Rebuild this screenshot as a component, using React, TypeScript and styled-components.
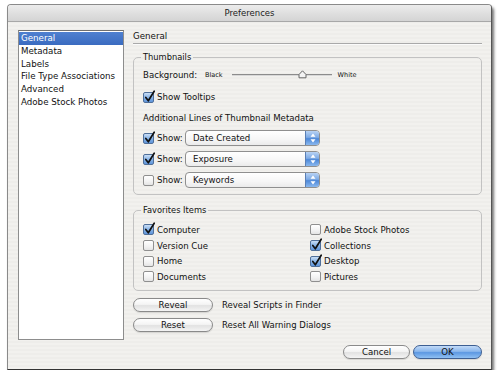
import React from "react";
import styled, { createGlobalStyle } from "styled-components";

const Global = createGlobalStyle`
  html, body { margin: 0; padding: 0; background: #ffffff; }
  body { font-family: "DejaVu Sans", "Liberation Sans", sans-serif; font-size: 8.5px; color: #111; }
  * { box-sizing: border-box; }
`;

const Window = styled.div`
  margin: 4px 0 0 7px;
  width: 485px;
  height: 366px;
  border: 1px solid #8a8a8a;
  border-right-color: #555;
  border-bottom-color: #333;
  border-radius: 4px 4px 0 0;
  box-shadow: 2px 3px 3px rgba(0, 0, 0, 0.55);
  background: repeating-linear-gradient(180deg, #eeedea 0px, #eeedea 2px, #f2f1ee 2px, #f2f1ee 4px);
  display: flex;
  flex-direction: column;
  overflow: hidden;
`;

const TitleBar = styled.div`
  height: 17px;
  border-bottom: 1px solid #a8a8a8;
  background: linear-gradient(180deg, #ececec 0%, #dedede 55%, #d4d4d4 100%);
  display: flex;
  align-items: center;
  justify-content: center;
  font-size: 8.5px;
  color: #222;
`;

const Content = styled.div`
  flex: 1;
  display: flex;
  flex-direction: column;
  padding: 8px 9px 10px 10px;
`;

const Columns = styled.div`
  display: flex;
  gap: 9px;
  height: 310px;
`;

const Sidebar = styled.ul`
  list-style: none;
  margin: 0;
  padding: 1px 0 0;
  width: 106px;
  height: 310px;
  background: #fff;
  border: 1px solid #8d8d8d;
  border-top-color: #6f6f6f;
`;

const SideItem = styled.li<{ $selected?: boolean }>`
  height: 12.8px;
  line-height: 12.8px;
  padding-left: 2px;
  font-size: 8.7px;
  white-space: nowrap;
  color: ${(p) => (p.$selected ? "#fff" : "#111")};
  background: ${(p) => (p.$selected ? "linear-gradient(180deg,#4f80d0,#3a6bc0)" : "transparent")};
`;

const Main = styled.div`
  flex: 1;
  display: flex;
  flex-direction: column;
`;

const Header = styled.div`
  height: 12px;
  line-height: 12px;
  font-size: 8.7px;
`;

const Separator = styled.div`
  margin-top: 1px;
  height: 2px;
  border-top: 1px solid #a9a9a9;
  border-bottom: 1px solid #fbfbfb;
`;

const Group = styled.fieldset<{ $mt: number; $pb: number }>`
  margin: ${(p) => p.$mt}px 0 0;
  padding: 0 10px ${(p) => p.$pb}px 9px;
  min-width: 0;
  border: 1px solid #c2c2c2;
  border-radius: 5px;
`;

const Legend = styled.legend`
  padding: 0 2px;
  margin-left: -2px;
  height: 12px;
  line-height: 12px;
  font-size: 8.3px;
`;

const Row = styled.div<{ $mt?: number; $h?: number }>`
  display: flex;
  align-items: center;
  height: ${(p) => p.$h ?? 14}px;
  margin-top: ${(p) => p.$mt ?? 0}px;
  white-space: nowrap;
  font-size: 8.6px;
`;

const BgLabel = styled.span`
  width: 62px;
  font-size: 8.6px;
`;

const Tiny = styled.span`
  font-size: 6.5px;
`;

const Slider = styled.div`
  position: relative;
  width: 100px;
  height: 2px;
  margin: 0 6px 0 9px;
  background: #8c8c8c;
  border-bottom: 1px solid #d8d8d8;
`;

const Knob = styled.svg`
  position: absolute;
  left: 66px;
  top: -4px;
`;

const Box = styled.span<{ $on?: boolean }>`
  position: relative;
  display: inline-block;
  width: 11px;
  height: 11px;
  border: 1px solid ${(p) => (p.$on ? "#4f6f9a" : "#8f8f8f")};
  border-radius: 2px;
  background: ${(p) =>
    p.$on
      ? "linear-gradient(180deg,#c9def6 0%,#86b2e6 50%,#5f95db 100%)"
      : "linear-gradient(180deg,#ffffff 0%,#f2f2f2 60%,#e4e4e4 100%)"};
  flex: none;
`;

const Tick = styled.svg`
  position: absolute;
  left: 0px;
  top: -3px;
`;

const CheckLabel = styled.span`
  margin-left: 3px;
  font-size: 8.6px;
`;

function Check({ on }: { on?: boolean }) {
  return (
    <Box $on={on}>
      {on && (
        <Tick width="12" height="13" viewBox="0 0 12 13">
          <path d="M1.8 7.5 L4.3 10.8 L10.2 1.2" fill="none" stroke="#111" strokeWidth="1.7" strokeLinecap="round" strokeLinejoin="round" />
        </Tick>
      )}
    </Box>
  );
}

const ShowLabel = styled.span`
  margin-left: 3px;
  width: 28px;
  font-size: 8.6px;
`;

const Popup = styled.div`
  display: flex;
  align-items: center;
  width: 135px;
  height: 16px;
  border: 1px solid #8f8f8f;
  border-radius: 4px;
  background: linear-gradient(180deg, #ffffff 0%, #f6f6f6 60%, #ebebeb 100%);
  overflow: hidden;
`;

const PopupText = styled.span`
  flex: 1;
  padding-left: 7px;
  font-size: 8.6px;
`;

const PopupCap = styled.span`
  width: 14px;
  height: 100%;
  display: flex;
  align-items: center;
  justify-content: center;
  border-left: 1px solid #5a7fb5;
  background: linear-gradient(180deg, #b7d2f4 0%, #7fabe5 45%, #4d88d8 55%, #8ab8ee 100%);
`;

function PopupMenu({ value }: { value: string }) {
  return (
    <Popup>
      <PopupText>{value}</PopupText>
      <PopupCap>
        <svg width="6" height="10" viewBox="0 0 6 10">
          <path d="M3 0.5 L5.5 3.8 H0.5 Z M3 9.5 L5.5 6.2 H0.5 Z" fill="#fff" />
        </svg>
      </PopupCap>
    </Popup>
  );
}

const FavGrid = styled.div`
  display: grid;
  grid-template-columns: 167px 1fr;
  grid-auto-rows: 15.7px;
  padding-top: 6px;
`;

const FavItem = styled.div`
  display: flex;
  align-items: center;
  white-space: nowrap;
`;

const ActionRow = styled.div<{ $mt: number }>`
  display: flex;
  align-items: center;
  margin-top: ${(p) => p.$mt}px;
  height: 14px;
`;

const PillButton = styled.button<{ $w: number; $primary?: boolean }>`
  width: ${(p) => p.$w}px;
  height: 14px;
  padding: 0;
  border-radius: 7px;
  font-family: "DejaVu Sans", "Liberation Sans", sans-serif;
  font-size: 8.6px;
  color: #111;
  border: 1px solid ${(p) => (p.$primary ? "#3e5f92" : "#8a8a8a")};
  background: ${(p) =>
    p.$primary
      ? "linear-gradient(180deg,#c3dbf8 0%,#8ab6ec 45%,#5d98e2 55%,#8fc0f3 100%)"
      : "linear-gradient(180deg,#ffffff 0%,#f4f4f4 45%,#e2e2e2 55%,#f4f4f4 100%)"};
  box-shadow: 0 1px 1px rgba(0, 0, 0, 0.12);
`;

const ActionText = styled.span`
  margin-left: 9px;
  font-size: 8.5px;
`;

const Footer = styled.div`
  display: flex;
  justify-content: flex-end;
  gap: 3px;
  margin-top: 5px;
`;

const favs: [string, boolean][] = [
  ["Computer", true],
  ["Adobe Stock Photos", false],
  ["Version Cue", false],
  ["Collections", true],
  ["Home", false],
  ["Desktop", true],
  ["Documents", false],
  ["Pictures", false],
];

export default function App() {
  return (
    <>
      <Global />
      <Window>
        <TitleBar>Preferences</TitleBar>
        <Content>
          <Columns>
            <Sidebar>
              <SideItem $selected>General</SideItem>
              <SideItem>Metadata</SideItem>
              <SideItem>Labels</SideItem>
              <SideItem>File Type Associations</SideItem>
              <SideItem>Advanced</SideItem>
              <SideItem>Adobe Stock Photos</SideItem>
            </Sidebar>
            <Main>
              <Header>General</Header>
              <Separator />
              <Group $mt={6} $pb={6}>
                <Legend>Thumbnails</Legend>
                <Row $mt={5}>
                  <BgLabel>Background:</BgLabel>
                  <Tiny>Black</Tiny>
                  <Slider>
                    <Knob width="9" height="9" viewBox="0 0 9 9">
                      <path d="M4.5 0.8 L8 4.5 V7.8 H1 V4.5 Z" fill="#f4f4f4" stroke="#666" strokeWidth="1" />
                    </Knob>
                  </Slider>
                  <Tiny>White</Tiny>
                </Row>
                <Row $mt={8}>
                  <Check on />
                  <CheckLabel>Show Tooltips</CheckLabel>
                </Row>
                <Row $mt={7}>Additional Lines of Thumbnail Metadata</Row>
                <Row $mt={5} $h={16}>
                  <Check on />
                  <ShowLabel>Show:</ShowLabel>
                  <PopupMenu value="Date Created" />
                </Row>
                <Row $mt={5} $h={16}>
                  <Check on />
                  <ShowLabel>Show:</ShowLabel>
                  <PopupMenu value="Exposure" />
                </Row>
                <Row $mt={5} $h={16}>
                  <Check />
                  <ShowLabel>Show:</ShowLabel>
                  <PopupMenu value="Keywords" />
                </Row>
              </Group>
              <Group $mt={9} $pb={5}>
                <Legend>Favorites Items</Legend>
                <FavGrid>
                  {favs.map(([name, on]) => (
                    <FavItem key={name}>
                      <Check on={on} />
                      <CheckLabel>{name}</CheckLabel>
                    </FavItem>
                  ))}
                </FavGrid>
              </Group>
              <ActionRow $mt={7}>
                <PillButton $w={80}>Reveal</PillButton>
                <ActionText>Reveal Scripts in Finder</ActionText>
              </ActionRow>
              <ActionRow $mt={6}>
                <PillButton $w={80}>Reset</PillButton>
                <ActionText>Reset All Warning Dialogs</ActionText>
              </ActionRow>
            </Main>
          </Columns>
          <Footer>
            <PillButton $w={67}>Cancel</PillButton>
            <PillButton $w={69} $primary>OK</PillButton>
          </Footer>
        </Content>
      </Window>
    </>
  );
}
